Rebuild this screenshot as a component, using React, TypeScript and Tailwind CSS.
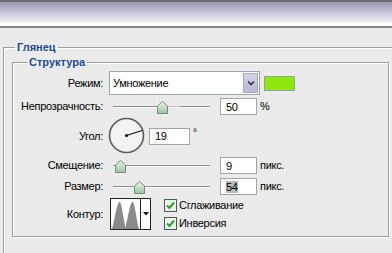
import React from 'react';

function Thumb() {
  return (
    <svg width="11" height="13" viewBox="0 0 11 13">
      <defs>
        <linearGradient id="tg" x1="0" y1="0" x2="0" y2="1">
          <stop offset="0" stopColor="#eef5ee" />
          <stop offset="1" stopColor="#9ec29e" />
        </linearGradient>
      </defs>
      <path d="M0.5 5 L5.5 0.5 L10.5 5 V12.5 H0.5 Z" fill="url(#tg)" stroke="#6f8f76" />
    </svg>
  );
}

function Slider({ pos, pink }: { pos: number; pink?: boolean }) {
  return (
    <div className="relative w-[97px] h-[17px]">
      <div className="absolute left-0 right-0 top-[8px] h-px bg-[#8e8e8e]" />
      <div className="absolute left-0 right-0 top-[9px] h-px bg-white" />
      {pink && <div className="absolute left-[53px] w-[14px] top-[8px] h-px bg-[#e7a9b0]" />}
      <div className="absolute top-[3px]" style={{ left: pos - 5 }}>
        <Thumb />
      </div>
    </div>
  );
}

function NumInput({ value, w = 37, hl }: { value: string; w?: number; hl?: boolean }) {
  return (
    <div
      className="h-[17px] bg-white border border-[#a5a5a5] flex items-center pl-[5px] text-black"
      style={{ width: w }}
    >
      <span className={hl ? 'bg-[#b8b8b8] leading-[12px]' : 'leading-[12px]'}>{value}</span>
    </div>
  );
}

function Check({ label }: { label: string }) {
  return (
    <div className="flex items-center h-[13px]">
      <div className="w-[13px] h-[13px] border border-[#3f5f5a] bg-[#eef3ee] flex items-center justify-center">
        <svg width="9" height="9" viewBox="0 0 9 9">
          <path d="M1 4.5 L3.5 7 L8 1.5" stroke="#27a32b" strokeWidth="2" fill="none" />
        </svg>
      </div>
      <span className="ml-[2px]">{label}</span>
    </div>
  );
}

export default function App() {
  return (
    <div className="w-[392px] h-[253px] overflow-hidden bg-[#ebebeb] text-[11px] tracking-[-0.3px] text-black font-['Liberation_Sans',Arial,sans-serif]">
      <div className="h-[2px] bg-[#707070]" />
      <div className="h-[21px] bg-gradient-to-b from-[#9b99b4] to-[#f4f4f8]" />
      <div className="h-[3px] bg-white" />
      <div className="h-[2px] bg-[#878787]" />

      <fieldset className="ml-[3px] mt-[13px] w-[420px] h-[260px] border border-[#9d9d9d] shadow-[inset_1px_1px_0_#fff]">
        <legend className="ml-[11px] px-[2px] font-bold text-[#1d4a94] leading-[13px] tracking-normal">Глянец</legend>

        <fieldset className="ml-[8px] mt-[2px] w-[377px] h-[181px] border border-[#9d9d9d] shadow-[inset_1px_1px_0_#fff,1px_1px_0_#fff]">
          <legend className="ml-[14px] px-[2px] font-bold text-[#1d4a94] leading-[13px] tracking-normal">Структура</legend>

          <div className="flex flex-col">
            <div className="flex items-center h-[24px] mt-[2px]">
              <div className="w-[90px] text-right">Режим:</div>
              <div className="ml-[6px] w-[151px] h-[24px] bg-white border border-[#9fa6b0] flex items-center">
                <span className="ml-[3px] flex-1">Умножение</span>
                <div className="w-[15px] h-[20px] mr-px bg-gradient-to-b from-[#d6d6ea] to-[#b9b9d4] border border-[#a9a9c6] flex items-center justify-center">
                  <svg width="8" height="6" viewBox="0 0 8 6">
                    <path d="M1 1.5 L4 4.5 L7 1.5" stroke="#333" strokeWidth="1.6" fill="none" />
                  </svg>
                </div>
              </div>
              <div className="ml-[4px] w-[31px] h-[15px] bg-[#8ee80c] border border-[#9aa39a]" />
            </div>

            <div className="flex items-center h-[17px] mt-[3px]">
              <div className="w-[90px] text-right">Непрозрачность:</div>
              <div className="ml-[10px]">
                <Slider pos={49} pink />
              </div>
              <div className="ml-[10px]">
                <NumInput value="50" />
              </div>
              <span className="ml-[3px]">%</span>
            </div>

            <div className="flex items-center h-[36px] mt-[2px]">
              <div className="w-[90px] text-right mt-[3px]">Угол:</div>
              <svg className="ml-[5px]" width="37" height="37" viewBox="0 0 37 37">
                <circle cx="18.5" cy="18.5" r="17" fill="#f3f3f3" stroke="#5a5a5e" strokeWidth="1.6" />
                <line x1="18.5" y1="18.5" x2="34" y2="13.5" stroke="#111" strokeWidth="1.2" />
                <circle cx="18.5" cy="18.5" r="1.6" fill="#111" />
              </svg>
              <div className="ml-[4px] mt-[2px]">
                <NumInput value="19" w={41} />
              </div>
              <span className="ml-[3px] self-start mt-[8px] text-[10px]">°</span>
            </div>

            <div className="flex items-center h-[17px] mt-[4px]">
              <div className="w-[90px] text-right">Смещение:</div>
              <div className="ml-[10px]">
                <Slider pos={7} />
              </div>
              <div className="ml-[10px]">
                <NumInput value="9" />
              </div>
              <span className="ml-[3px]">пикс.</span>
            </div>

            <div className="flex items-center h-[17px] mt-[4px]">
              <div className="w-[90px] text-right">Размер:</div>
              <div className="ml-[10px]">
                <Slider pos={26} />
              </div>
              <div className="ml-[10px]">
                <NumInput value="54" hl />
              </div>
              <span className="ml-[3px]">пикс.</span>
            </div>

            <div className="flex items-center h-[32px] mt-[3px]">
              <div className="w-[90px] text-right">Контур:</div>
              <div className="ml-[7px] w-[41px] h-[32px] bg-white border border-[#222] flex">
                <svg width="29" height="30" viewBox="0 0 29 30">
                  <path d="M1 30 C4 20 6 3 8.5 3 C11 3 12 20 15 30 Z" fill="#8a8a8a" />
                  <path d="M14 30 C17 20 19 3 21.5 3 C24 3 25 20 28 30 Z" fill="#8a8a8a" />
                </svg>
                <div className="w-px bg-[#222]" />
                <div className="flex-1 flex items-center justify-center">
                  <svg width="6" height="4" viewBox="0 0 6 4">
                    <path d="M0 0 H6 L3 3.5 Z" fill="#111" />
                  </svg>
                </div>
              </div>
              <div className="ml-[13px] flex flex-col gap-[5px] self-start mt-px">
                <Check label="Сглаживание" />
                <Check label="Инверсия" />
              </div>
            </div>
          </div>
        </fieldset>
      </fieldset>
    </div>
  );
}
